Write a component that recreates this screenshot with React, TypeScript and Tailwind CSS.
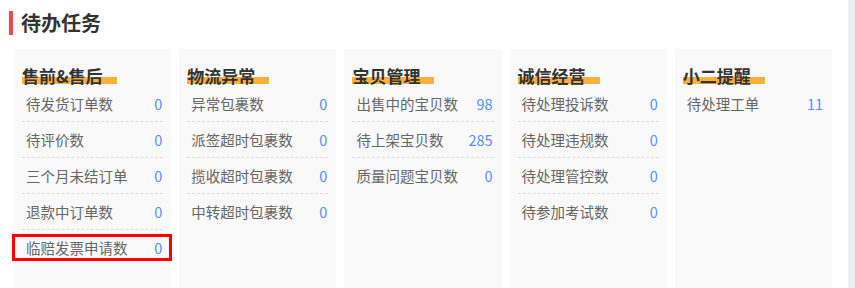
const groups = [
  {
    title: "售前&售后",
    items: [
      { label: "待发货订单数", value: 0 },
      { label: "待评价数", value: 0 },
      { label: "三个月未结订单", value: 0 },
      { label: "退款中订单数", value: 0 },
      { label: "临赔发票申请数", value: 0, marked: true },
    ],
  },
  {
    title: "物流异常",
    items: [
      { label: "异常包裹数", value: 0 },
      { label: "派签超时包裹数", value: 0 },
      { label: "揽收超时包裹数", value: 0 },
      { label: "中转超时包裹数", value: 0 },
    ],
  },
  {
    title: "宝贝管理",
    items: [
      { label: "出售中的宝贝数", value: 98 },
      { label: "待上架宝贝数", value: 285 },
      { label: "质量问题宝贝数", value: 0 },
    ],
  },
  {
    title: "诚信经营",
    items: [
      { label: "待处理投诉数", value: 0 },
      { label: "待处理违规数", value: 0 },
      { label: "待处理管控数", value: 0 },
      { label: "待参加考试数", value: 0 },
    ],
  },
  {
    title: "小二提醒",
    items: [{ label: "待处理工单", value: 11 }],
  },
];

export default function App() {
  return (
    <div
      className="flex w-[855px] h-[288px] overflow-hidden bg-white"
      style={{ fontFamily: '"Noto Sans CJK SC", "Microsoft YaHei", sans-serif' }}
    >
      <div className="w-[848px] flex flex-col">
        {/* Title */}
        <div className="pt-[11px] pl-[9px] flex items-center h-[35px]">
          <div className="w-[4px] h-[24px] bg-[#f2484b]" />
          <h1 className="ml-[8px] text-[20px] leading-[24px] font-bold text-[#333]">待办任务</h1>
        </div>

        {/* Cards */}
        <div className="mt-[14px] ml-[14px] w-[818px] grid grid-cols-5 gap-[8px] flex-1">
          {groups.map((g) => (
            <div key={g.title} className="bg-[#f9f9fa] px-[8px] pt-[15px]">
              <div className="h-[22px]">
                <span className="inline-block pr-[14px] text-[17px] leading-[22px] font-bold text-[#333] bg-[linear-gradient(to_bottom,transparent_55%,#fdb03c_55%,#fdb03c_86%,transparent_86%)]">
                  {g.title}
                </span>
              </div>
              <div>
                {g.items.map((it, i) => (
                  <div
                    key={it.label}
                    className={`relative h-[36px] pl-[4px] pr-[1px] flex items-center justify-between text-[14.5px] ${
                      i < g.items.length - 1 ? "border-b border-dashed border-[#dddddd]" : ""
                    }`}
                  >
                    <span className="text-[#666]">{it.label}</span>
                    <span className="text-[#5592ef]">{it.value}</span>
                    {it.marked && (
                      <div className="absolute left-[-10px] right-[-9px] top-[4px] bottom-[5px] border-[3px] border-[#ff0000]" />
                    )}
                  </div>
                ))}
              </div>
            </div>
          ))}
        </div>
      </div>
      <div className="w-[7px] bg-[#ebedf0]" />
    </div>
  );
}
